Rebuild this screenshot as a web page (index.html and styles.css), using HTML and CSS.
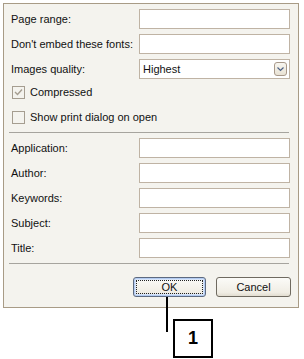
FILE: index.html
```html
<!DOCTYPE html>
<html lang="en">
<head>
    <meta charset="UTF-8">
    <meta name="viewport" content="width=device-width, initial-scale=1.0">
    <title>PDF export options</title>
    <link rel="stylesheet" href="styles.css">
</head>
<body>
    <div class="dialog">
        <div class="fields">
            <label>Page range:</label>
            <div class="input"></div>
            <label>Don't embed these fonts:</label>
            <div class="input"></div>
            <label>Images quality:</label>
            <div class="input select">
                <span>Highest</span>
                <span class="drop">
                    <svg width="7" height="5" viewBox="0 0 7 5"><path d="M0.5 0.5 L3.5 3.5 L6.5 0.5" fill="none" stroke="#4d6185" stroke-width="1.2"/></svg>
                </span>
            </div>
        </div>

        <div class="check-row">
            <span class="box checked">
                <svg width="9" height="9" viewBox="0 0 9 9"><path d="M1 4 L3.5 6.5 L8 1.5" fill="none" stroke="#a59d90" stroke-width="1.4"/></svg>
            </span>
            Compressed
        </div>
        <div class="check-row">
            <span class="box"></span>
            Show print dialog on open
        </div>

        <div class="separator"></div>

        <div class="fields">
            <label>Application:</label>
            <div class="input"></div>
            <label>Author:</label>
            <div class="input"></div>
            <label>Keywords:</label>
            <div class="input"></div>
            <label>Subject:</label>
            <div class="input"></div>
            <label>Title:</label>
            <div class="input"></div>
        </div>

        <div class="separator lower"></div>

        <div class="buttons">
            <button class="btn ok"><span>OK</span></button>
            <button class="btn cancel">Cancel</button>
        </div>
    </div>

    <div class="callout-line"></div>
    <div class="callout">1</div>
</body>
</html>
```

FILE: styles.css
```css
body {
    margin: 0;
    background: #ffffff;
    font-family: "Liberation Sans", Arial, sans-serif;
    font-size: 11px;
    color: #111111;
    position: relative;
    width: 304px;
    height: 359px;
}

.dialog {
    position: relative;
    margin: 3px 0 0 3px;
    box-sizing: border-box;
    width: 296px;
    height: 305px;
    border: 1px solid #a89b86;
    background: #f4f3ee;
    padding: 5px 7px 0 7px;
}

.fields {
    display: grid;
    grid-template-columns: 128px 151px;
    grid-auto-rows: 20px;
    row-gap: 5px;
}

.fields label {
    display: flex;
    align-items: center;
}

.input {
    box-sizing: border-box;
    border: 1px solid #bfb3a4;
    background: #ffffff;
}

.select {
    display: flex;
    align-items: center;
    justify-content: space-between;
    padding: 0 2px 0 3px;
}

.drop {
    box-sizing: border-box;
    width: 13px;
    height: 14px;
    border: 1px solid #a8998a;
    border-radius: 3px;
    background: linear-gradient(#f8f6f0, #e8e2d4);
    display: flex;
    align-items: center;
    justify-content: center;
}

.check-row {
    display: flex;
    align-items: flex-start;
    gap: 5px;
    height: 20px;
    margin-top: 5px;
    padding-left: 1px;
    line-height: 17px;
}

.box {
    box-sizing: border-box;
    width: 13px;
    height: 13px;
    margin-top: 2px;
    border: 1px solid #a59d90;
    background: #f4f3ee;
    display: flex;
    align-items: center;
    justify-content: center;
}

.separator {
    height: 1px;
    background: #a6a49e;
    margin: 3px 0 5px -2px;
    width: 280px;
}

.separator.lower {
    margin: 5px 0 0 -2px;
}

.buttons {
    display: flex;
    justify-content: flex-end;
    gap: 10px;
    margin-top: 13px;
}

.btn {
    box-sizing: border-box;
    height: 20px;
    border: 1px solid #6f6a60;
    border-radius: 3px;
    background: linear-gradient(#fbfbf8, #f0ede4 80%, #e2ddd0);
    font-family: "Liberation Sans", Arial, sans-serif;
    font-size: 11px;
    color: #111111;
    padding: 0;
}

.ok {
    width: 73px;
    border-color: #5d6a80;
    box-shadow: inset 0 0 0 1px #b4ccf2, inset 0 0 0 2px #d7e4f8;
    padding: 2px;
}

.ok span {
    display: flex;
    align-items: center;
    justify-content: center;
    height: 100%;
    border: 1px dotted #222222;
    box-sizing: border-box;
}

.cancel {
    width: 75px;
}

.callout-line {
    position: absolute;
    left: 166px;
    top: 297px;
    width: 2px;
    height: 35px;
    background: #000000;
}

.callout {
    position: absolute;
    left: 173px;
    top: 319px;
    width: 40px;
    height: 39px;
    box-sizing: border-box;
    border: 2px solid #000000;
    background: #ffffff;
    display: flex;
    align-items: center;
    justify-content: center;
    font-size: 18px;
    font-weight: bold;
    color: #000000;
}
```
